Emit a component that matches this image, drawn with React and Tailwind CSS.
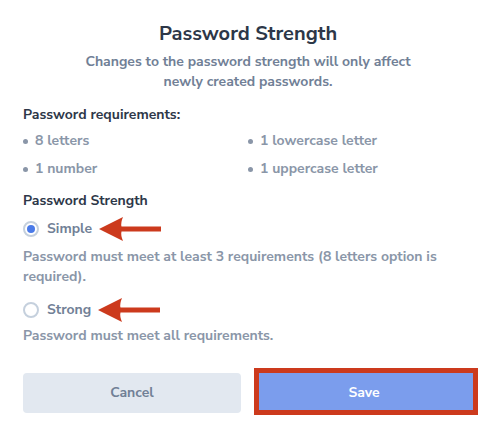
const Arrow = () => (
  <svg width="62" height="26" viewBox="0 0 62 26" className="ml-[7px] shrink-0">
    <path d="M0 13 L24 1 Q21.5 7 22.5 10.5 L62 10.5 L62 15.5 L22.5 15.5 Q21.5 19 24 25 Z" fill="#cc3a1d" />
  </svg>
);

const Radio = ({ label, checked }) => (
  <div className="flex items-center h-5">
    <span className="w-4 h-4 rounded-full border-2 border-[#c5d0dd] flex items-center justify-center shrink-0">
      {checked && <span className="w-2 h-2 rounded-full bg-[#4a7ae8]" />}
    </span>
    <span className="ml-2 font-bold text-[#718096]">{label}</span>
    <Arrow />
  </div>
);

const Req = ({ text }) => (
  <div className="flex items-center">
    <span className="w-[5px] h-[5px] rounded-full bg-[#8a96a8] mr-[7px]" />
    <span>{text}</span>
  </div>
);

export default function App() {
  return (
    <div
      className="w-[496px] h-[435px] bg-white px-[23px] pt-[20px] text-[14px] leading-5"
      style={{ fontFamily: '"Nunito Sans", Lato, "Open Sans", sans-serif' }}
    >
      <h2 className="text-center text-[20px] leading-7 font-bold text-[#2d3748]">Password Strength</h2>
      <p className="mt-[4px] text-center font-bold text-[#718096] px-[50px]">
        Changes to the password strength will only affect newly created passwords.
      </p>

      <h3 className="mt-[13px] font-bold text-[#2d3748]">Password requirements:</h3>
      <div className="mt-[6px] grid grid-cols-2 gap-y-2 font-bold text-[#8a96a8]">
        <Req text="8 letters" />
        <Req text="1 lowercase letter" />
        <Req text="1 number" />
        <Req text="1 uppercase letter" />
      </div>

      <h3 className="mt-3 font-bold text-[#2d3748]">Password Strength</h3>
      <div className="mt-2">
        <Radio label="Simple" checked />
        <p className="mt-2 font-bold text-[#8a96a8]">
          Password must meet at least 3 requirements (8 letters option is required).
        </p>
      </div>
      <div className="mt-[13px]">
        <Radio label="Strong" />
        <p className="mt-[6px] font-bold text-[#8a96a8]">Password must meet all requirements.</p>
      </div>

      <div className="mt-[27px] grid grid-cols-2 gap-[14px]">
        <button className="h-10 rounded bg-[#e2e8f0] font-bold text-[#718096]">Cancel</button>
        <div className="relative">
          <button className="w-full h-10 bg-[#7b9ded] font-bold text-white">Save</button>
          <span className="absolute left-[-1px] top-[-5px] right-[-5px] bottom-[-2px] border-[5px] border-[#cc3a1d] pointer-events-none" />
        </div>
      </div>
    </div>
  );
}
